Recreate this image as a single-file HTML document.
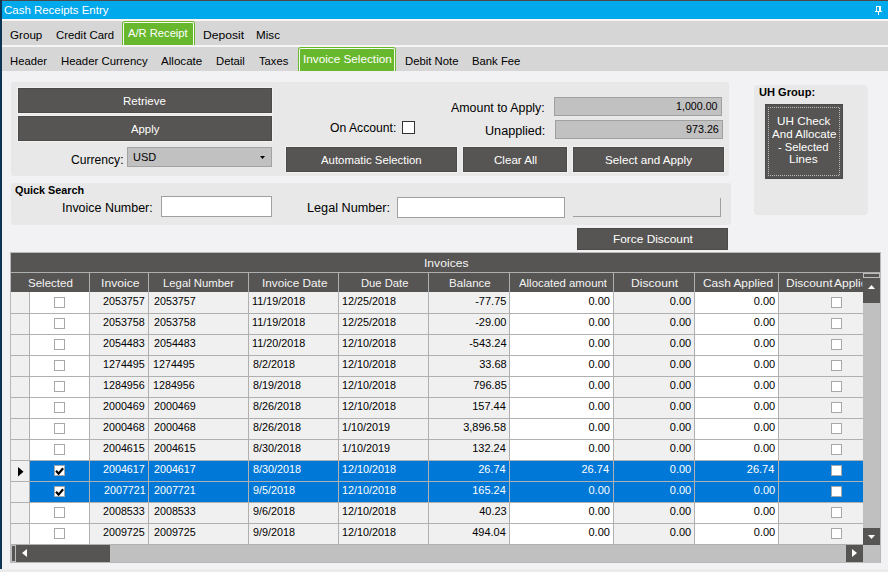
<!DOCTYPE html><html><head><meta charset="utf-8"><title>Cash Receipts Entry</title><style>

*{margin:0;padding:0}
html,body{width:888px;height:572px;overflow:hidden;background:#f2f2f4}
body{position:relative;font-family:"Liberation Sans", sans-serif}
.b{position:absolute}
.t{position:absolute;white-space:pre;font-family:"Liberation Sans", sans-serif;transform-origin:0 0}

</style></head><body>
<div class="b" style="left:0px;top:0px;width:888px;height:572px;background:#f2f2f4;"></div>
<div class="b" style="left:0px;top:0px;width:888px;height:1px;background:#4d4846;"></div>
<div class="b" style="left:0px;top:1px;width:888px;height:18px;background:#00a8ec;"></div>
<div class="b" style="left:0px;top:19px;width:888px;height:2px;background:#fbf4f1;"></div>
<div class="b" style="left:0px;top:21px;width:888px;height:24px;background:#d6d6d6;"></div>
<div class="b" style="left:0px;top:45px;width:888px;height:2px;background:#f6f4f4;"></div>
<div class="b" style="left:0px;top:47px;width:888px;height:24px;background:#d6d6d6;"></div>
<div class="b" style="left:0px;top:569px;width:888px;height:3px;background:#ebebeb;"></div>
<div class="b" style="left:0px;top:0px;width:2px;height:569px;background:#0b3552;"></div>
<div class="t" style="left:4.2px;top:5.0px;font-size:11px;line-height:11px;color:#fff;transform:scaleX(1.042);">Cash Receipts Entry</div>
<div class="b" style="left:876px;top:6px;width:5px;height:1px;background:#fff;"></div>
<div class="b" style="left:876px;top:6px;width:1px;height:5px;background:#fff;"></div>
<div class="b" style="left:879px;top:6px;width:2px;height:5px;background:#fff;"></div>
<div class="b" style="left:875px;top:11px;width:7px;height:1px;background:#fff;"></div>
<div class="b" style="left:878px;top:12px;width:1px;height:3px;background:#fff;"></div>
<div class="t" style="left:9.8px;top:30.0px;font-size:11px;line-height:11px;color:#000;transform:scaleX(1.057);">Group</div>
<div class="t" style="left:56.2px;top:30.0px;font-size:11px;line-height:11px;color:#000;transform:scaleX(1.032);">Credit Card</div>
<div class="b" style="left:122px;top:21px;width:73px;height:24px;background:#68b82d;border-radius:3px 3px 0 0;"></div>
<div class="b" style="left:123px;top:22px;width:71px;height:23px;border:1px solid #f4faf0;border-bottom:none;border-radius:2px 2px 0 0;box-sizing:border-box"></div>
<div class="t" style="left:128.0px;top:28.0px;font-size:11px;line-height:11px;color:#fff;transform:scaleX(1.017);">A/R Receipt</div>
<div class="t" style="left:202.7px;top:30.0px;font-size:11px;line-height:11px;color:#000;transform:scaleX(1.103);">Deposit</div>
<div class="t" style="left:255.94px;top:30.0px;font-size:11px;line-height:11px;color:#000;transform:scaleX(1.062);">Misc</div>
<div class="t" style="left:10.18px;top:56.0px;font-size:11px;line-height:11px;color:#000;transform:scaleX(1.023);">Header</div>
<div class="t" style="left:60.77px;top:56.0px;font-size:11px;line-height:11px;color:#000;transform:scaleX(1.034);">Header Currency</div>
<div class="t" style="left:160.8px;top:56.0px;font-size:11px;line-height:11px;color:#000;transform:scaleX(1.054);">Allocate</div>
<div class="t" style="left:215.57px;top:56.0px;font-size:11px;line-height:11px;color:#000;transform:scaleX(1.026);">Detail</div>
<div class="t" style="left:259.4px;top:56.0px;font-size:11px;line-height:11px;color:#000;transform:scaleX(1.021);">Taxes</div>
<div class="b" style="left:298px;top:47px;width:98px;height:24px;background:#68b82d;border-radius:3px 3px 0 0;"></div>
<div class="b" style="left:299px;top:48px;width:96px;height:23px;border:1px solid #f4faf0;border-bottom:none;border-radius:2px 2px 0 0;box-sizing:border-box"></div>
<div class="t" style="left:302.93px;top:54.0px;font-size:11px;line-height:11px;color:#fff;transform:scaleX(1.068);">Invoice Selection</div>
<div class="t" style="left:405.27px;top:56.0px;font-size:11px;line-height:11px;color:#000;transform:scaleX(1.029);">Debit Note</div>
<div class="t" style="left:471.57px;top:56.0px;font-size:11px;line-height:11px;color:#000;transform:scaleX(1.028);">Bank Fee</div>
<div class="b" style="left:11px;top:82px;width:718px;height:94px;background:#e8e8e8;border-radius:3px"></div>
<div class="b" style="left:17px;top:87px;width:256px;height:27px;background:#f1f1f1;"></div>
<div class="b" style="left:18px;top:88px;width:254px;height:25px;background:#575553;border:1px solid #4c4a48;box-sizing:border-box;"></div>
<div class="t" style="left:123.15px;top:96.0px;font-size:11px;line-height:11px;color:#fff;transform:scaleX(1.047);">Retrieve</div>
<div class="b" style="left:17px;top:115px;width:256px;height:27px;background:#f1f1f1;"></div>
<div class="b" style="left:18px;top:116px;width:254px;height:25px;background:#575553;border:1px solid #4c4a48;box-sizing:border-box;"></div>
<div class="t" style="left:131.0px;top:124.0px;font-size:11px;line-height:11px;color:#fff;transform:scaleX(1.029);">Apply</div>
<div class="t" style="left:71.2px;top:154.0px;font-size:12.3px;line-height:12.3px;color:#000;transform:scaleX(0.985);">Currency:</div>
<div class="b" style="left:127px;top:147px;width:145px;height:20px;background:#c1c1c1;border:1px solid #a3a3a3;box-sizing:border-box;"></div>
<div class="t" style="left:133.0px;top:152.0px;font-size:11px;line-height:11px;color:#000;">USD</div>
<svg class="b" style="left:260px;top:156px" width="5" height="3"><path d="M0 0h5L2.5 3z" fill="#000"/></svg>
<div class="t" style="left:330.1px;top:122.0px;font-size:12.3px;line-height:12.3px;color:#000;transform:scaleX(0.991);">On Account:</div>
<div class="b" style="left:402px;top:121px;width:13px;height:13px;background:#fff;border:1px solid #333;box-sizing:border-box;"></div>
<div class="t" style="left:451.1px;top:102.0px;font-size:12.3px;line-height:12.3px;color:#000;transform:scaleX(1.008);">Amount to Apply:</div>
<div class="b" style="left:554px;top:97px;width:168px;height:19px;background:#c1c1c1;border:1px solid #a0a0a0;box-sizing:border-box;"></div>
<div class="t" style="left:676.03px;top:101.0px;font-size:11px;line-height:11px;color:#000;transform:scaleX(0.969);">1,000.00</div>
<div class="t" style="left:485.17px;top:125.0px;font-size:12.3px;line-height:12.3px;color:#000;transform:scaleX(1.026);">Unapplied:</div>
<div class="b" style="left:555px;top:120px;width:168px;height:19px;background:#c1c1c1;border:1px solid #a0a0a0;box-sizing:border-box;"></div>
<div class="t" style="left:686.2px;top:124.0px;font-size:11px;line-height:11px;color:#000;transform:scaleX(0.976);">973.26</div>
<div class="b" style="left:285px;top:146px;width:173px;height:27px;background:#f1f1f1;"></div>
<div class="b" style="left:286px;top:147px;width:171px;height:25px;background:#575553;border:1px solid #4c4a48;box-sizing:border-box;"></div>
<div class="t" style="left:321.1px;top:155.0px;font-size:11px;line-height:11px;color:#fff;transform:scaleX(1.035);">Automatic Selection</div>
<div class="b" style="left:462px;top:146px;width:106px;height:27px;background:#f1f1f1;"></div>
<div class="b" style="left:463px;top:147px;width:104px;height:25px;background:#575553;border:1px solid #4c4a48;box-sizing:border-box;"></div>
<div class="t" style="left:494.4px;top:155.0px;font-size:11px;line-height:11px;color:#fff;transform:scaleX(1.053);">Clear All</div>
<div class="b" style="left:572px;top:146px;width:153px;height:27px;background:#f1f1f1;"></div>
<div class="b" style="left:573px;top:147px;width:151px;height:25px;background:#575553;border:1px solid #4c4a48;box-sizing:border-box;"></div>
<div class="t" style="left:604.94px;top:155.0px;font-size:11px;line-height:11px;color:#fff;transform:scaleX(1.062);">Select and Apply</div>
<div class="b" style="left:754px;top:85px;width:114px;height:130px;background:#e8e8e8;border-radius:4px"></div>
<div class="t" style="left:758.6px;top:87.0px;font-size:11px;line-height:11px;color:#000;transform:scaleX(1.009);font-weight:700;">UH Group:</div>
<div class="b" style="left:765px;top:104px;width:78px;height:75px;background:#575553;border:1px solid #4c4a48;box-sizing:border-box;"></div>
<svg class="b" style="left:768px;top:107px" width="72" height="69"><rect x="0.5" y="0.5" width="71" height="68" fill="none" stroke="#bcbcbc" stroke-width="1" stroke-dasharray="1 1" stroke-dashoffset="0.5" shape-rendering="crispEdges"/></svg>
<div class="t" style="left:776.93px;top:116.0px;font-size:11px;line-height:11px;color:#fff;transform:scaleX(1.065);">UH Check</div>
<div class="t" style="left:772.0px;top:129.0px;font-size:11px;line-height:11px;color:#fff;transform:scaleX(1.052);">And Allocate</div>
<div class="t" style="left:778.3px;top:142.0px;font-size:11px;line-height:11px;color:#fff;transform:scaleX(1.02);">- Selected</div>
<div class="t" style="left:789.01px;top:154.0px;font-size:11px;line-height:11px;color:#fff;transform:scaleX(1.088);">Lines</div>
<div class="b" style="left:11px;top:183px;width:720px;height:42px;background:#e8e8e8;border-radius:3px"></div>
<div class="t" style="left:15.4px;top:185.0px;font-size:11px;line-height:11px;color:#000;transform:scaleX(0.983);font-weight:700;">Quick Search</div>
<div class="t" style="left:62.19px;top:202.0px;font-size:12.3px;line-height:12.3px;color:#000;transform:scaleX(1.013);">Invoice Number:</div>
<div class="b" style="left:161px;top:196px;width:111px;height:21px;background:#fff;border:1px solid #a0a0a0;box-sizing:border-box;"></div>
<div class="t" style="left:307.07px;top:202.0px;font-size:12.3px;line-height:12.3px;color:#000;transform:scaleX(1.03);">Legal Number:</div>
<div class="b" style="left:397px;top:197px;width:168px;height:21px;background:#fff;border:1px solid #a0a0a0;box-sizing:border-box;"></div>
<div class="b" style="left:573px;top:198px;width:148px;height:19px;border-right:1px solid #a0a0a0;border-bottom:1px solid #a0a0a0;box-sizing:border-box"></div>
<div class="b" style="left:576px;top:227px;width:153px;height:24px;background:#f1f1f1;"></div>
<div class="b" style="left:577px;top:228px;width:151px;height:22px;background:#575553;border:1px solid #4c4a48;box-sizing:border-box;"></div>
<div class="t" style="left:612.92px;top:234.0px;font-size:11px;line-height:11px;color:#fff;transform:scaleX(1.079);">Force Discount</div>
<div class="b" style="left:10px;top:252px;width:871px;height:311px;background:#b9b9b9;"></div>
<div class="b" style="left:11px;top:253px;width:869px;height:309px;background:#575553;"></div>
<div class="b" style="left:11px;top:272px;width:869px;height:1px;background:#aeaeae;"></div>
<div class="t" style="left:423.7px;top:258.0px;font-size:11px;line-height:11px;color:#f4f4f4;transform:scaleX(1.103);">Invoices</div>
<div class="b" style="left:89px;top:273px;width:1px;height:19px;background:#b0b0b0;"></div>
<div class="b" style="left:148px;top:273px;width:1px;height:19px;background:#b0b0b0;"></div>
<div class="b" style="left:248px;top:273px;width:1px;height:19px;background:#b0b0b0;"></div>
<div class="b" style="left:338px;top:273px;width:1px;height:19px;background:#b0b0b0;"></div>
<div class="b" style="left:428px;top:273px;width:1px;height:19px;background:#b0b0b0;"></div>
<div class="b" style="left:509px;top:273px;width:1px;height:19px;background:#b0b0b0;"></div>
<div class="b" style="left:613px;top:273px;width:1px;height:19px;background:#b0b0b0;"></div>
<div class="b" style="left:694px;top:273px;width:1px;height:19px;background:#b0b0b0;"></div>
<div class="b" style="left:778px;top:273px;width:1px;height:19px;background:#b0b0b0;"></div>
<div class="t" style="left:27.85px;top:278.0px;font-size:11px;line-height:11px;color:#f4f4f4;transform:scaleX(1.049);">Selected</div>
<div class="t" style="left:101.09px;top:278.0px;font-size:11px;line-height:11px;color:#f4f4f4;transform:scaleX(1.106);">Invoice</div>
<div class="t" style="left:162.77px;top:278.0px;font-size:11px;line-height:11px;color:#f4f4f4;transform:scaleX(1.029);">Legal Number</div>
<div class="t" style="left:261.53px;top:278.0px;font-size:11px;line-height:11px;color:#f4f4f4;transform:scaleX(1.07);">Invoice Date</div>
<div class="t" style="left:360.78px;top:278.0px;font-size:11px;line-height:11px;color:#f4f4f4;transform:scaleX(1.02);">Due Date</div>
<div class="t" style="left:448.75px;top:278.0px;font-size:11px;line-height:11px;color:#f4f4f4;transform:scaleX(1.051);">Balance</div>
<div class="t" style="left:518.8px;top:278.0px;font-size:11px;line-height:11px;color:#f4f4f4;transform:scaleX(1.035);">Allocated amount</div>
<div class="t" style="left:630.9px;top:278.0px;font-size:11px;line-height:11px;color:#f4f4f4;transform:scaleX(1.098);">Discount</div>
<div class="t" style="left:703.0px;top:278.0px;font-size:11px;line-height:11px;color:#f4f4f4;transform:scaleX(1.081);">Cash Applied</div>
<div class="t" style="left:785.51px;top:278.0px;font-size:11px;line-height:11px;color:#f4f4f4;transform:scaleX(1.086);">Discount</div>
<div class="t" style="left:834.2px;top:278.0px;font-size:11px;line-height:11px;color:#f4f4f4;transform:scaleX(1.09);width:26.42px;overflow:hidden;">Applied</div>
<div class="b" style="left:11px;top:292px;width:852px;height:253px;background:#b0b0b0;"></div>
<div class="b" style="left:11px;top:292px;width:18px;height:21px;background:#f0f0f0;"></div>
<div class="b" style="left:30px;top:292px;width:59px;height:21px;background:#ffffff;"></div>
<div class="b" style="left:90px;top:292px;width:58px;height:21px;background:#f0f0f0;"></div>
<div class="b" style="left:149px;top:292px;width:99px;height:21px;background:#f0f0f0;"></div>
<div class="b" style="left:249px;top:292px;width:89px;height:21px;background:#f0f0f0;"></div>
<div class="b" style="left:339px;top:292px;width:89px;height:21px;background:#f0f0f0;"></div>
<div class="b" style="left:429px;top:292px;width:80px;height:21px;background:#f0f0f0;"></div>
<div class="b" style="left:510px;top:292px;width:103px;height:21px;background:#ffffff;"></div>
<div class="b" style="left:614px;top:292px;width:80px;height:21px;background:#f0f0f0;"></div>
<div class="b" style="left:695px;top:292px;width:83px;height:21px;background:#ffffff;"></div>
<div class="b" style="left:779px;top:292px;width:84px;height:21px;background:#f0f0f0;"></div>
<div class="t" style="left:102.98px;top:296.0px;font-size:11px;line-height:11px;color:#000;transform:scaleX(0.975);">2053757</div>
<div class="t" style="left:154.3px;top:296.0px;font-size:11px;line-height:11px;color:#000;transform:scaleX(0.975);">2053757</div>
<div class="t" style="left:252.12px;top:296.0px;font-size:11px;line-height:11px;color:#000;transform:scaleX(0.98);">11/19/2018</div>
<div class="t" style="left:342.12px;top:296.0px;font-size:11px;line-height:11px;color:#000;transform:scaleX(0.98);">12/25/2018</div>
<div class="t" style="left:475.2px;top:296.0px;font-size:11px;line-height:11px;color:#000;">-77.75</div>
<div class="t" style="left:588.5px;top:296.0px;font-size:11px;line-height:11px;color:#000;">0.00</div>
<div class="t" style="left:669.8px;top:296.0px;font-size:11px;line-height:11px;color:#000;">0.00</div>
<div class="t" style="left:753.8px;top:296.0px;font-size:11px;line-height:11px;color:#000;">0.00</div>
<div class="b" style="left:54px;top:297px;width:11px;height:11px;background:#fff;border:1px solid #a8a8a8;box-sizing:border-box;"></div>
<div class="b" style="left:831px;top:297px;width:11px;height:11px;background:#fff;border:1px solid #a8a8a8;box-sizing:border-box;"></div>
<div class="b" style="left:11px;top:314px;width:18px;height:20px;background:#f0f0f0;"></div>
<div class="b" style="left:30px;top:314px;width:59px;height:20px;background:#ffffff;"></div>
<div class="b" style="left:90px;top:314px;width:58px;height:20px;background:#f0f0f0;"></div>
<div class="b" style="left:149px;top:314px;width:99px;height:20px;background:#f0f0f0;"></div>
<div class="b" style="left:249px;top:314px;width:89px;height:20px;background:#f0f0f0;"></div>
<div class="b" style="left:339px;top:314px;width:89px;height:20px;background:#f0f0f0;"></div>
<div class="b" style="left:429px;top:314px;width:80px;height:20px;background:#f0f0f0;"></div>
<div class="b" style="left:510px;top:314px;width:103px;height:20px;background:#ffffff;"></div>
<div class="b" style="left:614px;top:314px;width:80px;height:20px;background:#f0f0f0;"></div>
<div class="b" style="left:695px;top:314px;width:83px;height:20px;background:#ffffff;"></div>
<div class="b" style="left:779px;top:314px;width:84px;height:20px;background:#f0f0f0;"></div>
<div class="t" style="left:102.98px;top:317.0px;font-size:11px;line-height:11px;color:#000;transform:scaleX(0.975);">2053758</div>
<div class="t" style="left:154.3px;top:317.0px;font-size:11px;line-height:11px;color:#000;transform:scaleX(0.975);">2053758</div>
<div class="t" style="left:252.12px;top:317.0px;font-size:11px;line-height:11px;color:#000;transform:scaleX(0.98);">11/19/2018</div>
<div class="t" style="left:342.12px;top:317.0px;font-size:11px;line-height:11px;color:#000;transform:scaleX(0.98);">12/25/2018</div>
<div class="t" style="left:475.2px;top:317.0px;font-size:11px;line-height:11px;color:#000;">-29.00</div>
<div class="t" style="left:588.5px;top:317.0px;font-size:11px;line-height:11px;color:#000;">0.00</div>
<div class="t" style="left:669.8px;top:317.0px;font-size:11px;line-height:11px;color:#000;">0.00</div>
<div class="t" style="left:753.8px;top:317.0px;font-size:11px;line-height:11px;color:#000;">0.00</div>
<div class="b" style="left:54px;top:318px;width:11px;height:11px;background:#fff;border:1px solid #a8a8a8;box-sizing:border-box;"></div>
<div class="b" style="left:831px;top:318px;width:11px;height:11px;background:#fff;border:1px solid #a8a8a8;box-sizing:border-box;"></div>
<div class="b" style="left:11px;top:335px;width:18px;height:20px;background:#f0f0f0;"></div>
<div class="b" style="left:30px;top:335px;width:59px;height:20px;background:#ffffff;"></div>
<div class="b" style="left:90px;top:335px;width:58px;height:20px;background:#f0f0f0;"></div>
<div class="b" style="left:149px;top:335px;width:99px;height:20px;background:#f0f0f0;"></div>
<div class="b" style="left:249px;top:335px;width:89px;height:20px;background:#f0f0f0;"></div>
<div class="b" style="left:339px;top:335px;width:89px;height:20px;background:#f0f0f0;"></div>
<div class="b" style="left:429px;top:335px;width:80px;height:20px;background:#f0f0f0;"></div>
<div class="b" style="left:510px;top:335px;width:103px;height:20px;background:#ffffff;"></div>
<div class="b" style="left:614px;top:335px;width:80px;height:20px;background:#f0f0f0;"></div>
<div class="b" style="left:695px;top:335px;width:83px;height:20px;background:#ffffff;"></div>
<div class="b" style="left:779px;top:335px;width:84px;height:20px;background:#f0f0f0;"></div>
<div class="t" style="left:102.98px;top:338.0px;font-size:11px;line-height:11px;color:#000;transform:scaleX(0.975);">2054483</div>
<div class="t" style="left:154.3px;top:338.0px;font-size:11px;line-height:11px;color:#000;transform:scaleX(0.975);">2054483</div>
<div class="t" style="left:252.12px;top:338.0px;font-size:11px;line-height:11px;color:#000;transform:scaleX(0.98);">11/20/2018</div>
<div class="t" style="left:342.12px;top:338.0px;font-size:11px;line-height:11px;color:#000;transform:scaleX(0.98);">12/10/2018</div>
<div class="t" style="left:469.2px;top:338.0px;font-size:11px;line-height:11px;color:#000;">-543.24</div>
<div class="t" style="left:588.5px;top:338.0px;font-size:11px;line-height:11px;color:#000;">0.00</div>
<div class="t" style="left:669.8px;top:338.0px;font-size:11px;line-height:11px;color:#000;">0.00</div>
<div class="t" style="left:753.8px;top:338.0px;font-size:11px;line-height:11px;color:#000;">0.00</div>
<div class="b" style="left:54px;top:339px;width:11px;height:11px;background:#fff;border:1px solid #a8a8a8;box-sizing:border-box;"></div>
<div class="b" style="left:831px;top:339px;width:11px;height:11px;background:#fff;border:1px solid #a8a8a8;box-sizing:border-box;"></div>
<div class="b" style="left:11px;top:356px;width:18px;height:20px;background:#f0f0f0;"></div>
<div class="b" style="left:30px;top:356px;width:59px;height:20px;background:#ffffff;"></div>
<div class="b" style="left:90px;top:356px;width:58px;height:20px;background:#f0f0f0;"></div>
<div class="b" style="left:149px;top:356px;width:99px;height:20px;background:#f0f0f0;"></div>
<div class="b" style="left:249px;top:356px;width:89px;height:20px;background:#f0f0f0;"></div>
<div class="b" style="left:339px;top:356px;width:89px;height:20px;background:#f0f0f0;"></div>
<div class="b" style="left:429px;top:356px;width:80px;height:20px;background:#f0f0f0;"></div>
<div class="b" style="left:510px;top:356px;width:103px;height:20px;background:#ffffff;"></div>
<div class="b" style="left:614px;top:356px;width:80px;height:20px;background:#f0f0f0;"></div>
<div class="b" style="left:695px;top:356px;width:83px;height:20px;background:#ffffff;"></div>
<div class="b" style="left:779px;top:356px;width:84px;height:20px;background:#f0f0f0;"></div>
<div class="t" style="left:102.98px;top:359.0px;font-size:11px;line-height:11px;color:#000;transform:scaleX(0.975);">1274495</div>
<div class="t" style="left:153.33px;top:359.0px;font-size:11px;line-height:11px;color:#000;transform:scaleX(0.975);">1274495</div>
<div class="t" style="left:253.1px;top:359.0px;font-size:11px;line-height:11px;color:#000;transform:scaleX(0.98);">8/2/2018</div>
<div class="t" style="left:342.12px;top:359.0px;font-size:11px;line-height:11px;color:#000;transform:scaleX(0.98);">12/10/2018</div>
<div class="t" style="left:479.2px;top:359.0px;font-size:11px;line-height:11px;color:#000;">33.68</div>
<div class="t" style="left:588.5px;top:359.0px;font-size:11px;line-height:11px;color:#000;">0.00</div>
<div class="t" style="left:669.8px;top:359.0px;font-size:11px;line-height:11px;color:#000;">0.00</div>
<div class="t" style="left:753.8px;top:359.0px;font-size:11px;line-height:11px;color:#000;">0.00</div>
<div class="b" style="left:54px;top:360px;width:11px;height:11px;background:#fff;border:1px solid #a8a8a8;box-sizing:border-box;"></div>
<div class="b" style="left:831px;top:360px;width:11px;height:11px;background:#fff;border:1px solid #a8a8a8;box-sizing:border-box;"></div>
<div class="b" style="left:11px;top:377px;width:18px;height:20px;background:#f0f0f0;"></div>
<div class="b" style="left:30px;top:377px;width:59px;height:20px;background:#ffffff;"></div>
<div class="b" style="left:90px;top:377px;width:58px;height:20px;background:#f0f0f0;"></div>
<div class="b" style="left:149px;top:377px;width:99px;height:20px;background:#f0f0f0;"></div>
<div class="b" style="left:249px;top:377px;width:89px;height:20px;background:#f0f0f0;"></div>
<div class="b" style="left:339px;top:377px;width:89px;height:20px;background:#f0f0f0;"></div>
<div class="b" style="left:429px;top:377px;width:80px;height:20px;background:#f0f0f0;"></div>
<div class="b" style="left:510px;top:377px;width:103px;height:20px;background:#ffffff;"></div>
<div class="b" style="left:614px;top:377px;width:80px;height:20px;background:#f0f0f0;"></div>
<div class="b" style="left:695px;top:377px;width:83px;height:20px;background:#ffffff;"></div>
<div class="b" style="left:779px;top:377px;width:84px;height:20px;background:#f0f0f0;"></div>
<div class="t" style="left:102.98px;top:380.0px;font-size:11px;line-height:11px;color:#000;transform:scaleX(0.975);">1284956</div>
<div class="t" style="left:153.33px;top:380.0px;font-size:11px;line-height:11px;color:#000;transform:scaleX(0.975);">1284956</div>
<div class="t" style="left:253.1px;top:380.0px;font-size:11px;line-height:11px;color:#000;transform:scaleX(0.98);">8/19/2018</div>
<div class="t" style="left:342.12px;top:380.0px;font-size:11px;line-height:11px;color:#000;transform:scaleX(0.98);">12/10/2018</div>
<div class="t" style="left:473.2px;top:380.0px;font-size:11px;line-height:11px;color:#000;">796.85</div>
<div class="t" style="left:588.5px;top:380.0px;font-size:11px;line-height:11px;color:#000;">0.00</div>
<div class="t" style="left:669.8px;top:380.0px;font-size:11px;line-height:11px;color:#000;">0.00</div>
<div class="t" style="left:753.8px;top:380.0px;font-size:11px;line-height:11px;color:#000;">0.00</div>
<div class="b" style="left:54px;top:381px;width:11px;height:11px;background:#fff;border:1px solid #a8a8a8;box-sizing:border-box;"></div>
<div class="b" style="left:831px;top:381px;width:11px;height:11px;background:#fff;border:1px solid #a8a8a8;box-sizing:border-box;"></div>
<div class="b" style="left:11px;top:398px;width:18px;height:20px;background:#f0f0f0;"></div>
<div class="b" style="left:30px;top:398px;width:59px;height:20px;background:#ffffff;"></div>
<div class="b" style="left:90px;top:398px;width:58px;height:20px;background:#f0f0f0;"></div>
<div class="b" style="left:149px;top:398px;width:99px;height:20px;background:#f0f0f0;"></div>
<div class="b" style="left:249px;top:398px;width:89px;height:20px;background:#f0f0f0;"></div>
<div class="b" style="left:339px;top:398px;width:89px;height:20px;background:#f0f0f0;"></div>
<div class="b" style="left:429px;top:398px;width:80px;height:20px;background:#f0f0f0;"></div>
<div class="b" style="left:510px;top:398px;width:103px;height:20px;background:#ffffff;"></div>
<div class="b" style="left:614px;top:398px;width:80px;height:20px;background:#f0f0f0;"></div>
<div class="b" style="left:695px;top:398px;width:83px;height:20px;background:#ffffff;"></div>
<div class="b" style="left:779px;top:398px;width:84px;height:20px;background:#f0f0f0;"></div>
<div class="t" style="left:102.98px;top:401.0px;font-size:11px;line-height:11px;color:#000;transform:scaleX(0.975);">2000469</div>
<div class="t" style="left:154.3px;top:401.0px;font-size:11px;line-height:11px;color:#000;transform:scaleX(0.975);">2000469</div>
<div class="t" style="left:253.1px;top:401.0px;font-size:11px;line-height:11px;color:#000;transform:scaleX(0.98);">8/26/2018</div>
<div class="t" style="left:342.12px;top:401.0px;font-size:11px;line-height:11px;color:#000;transform:scaleX(0.98);">12/10/2018</div>
<div class="t" style="left:472.2px;top:401.0px;font-size:11px;line-height:11px;color:#000;">157.44</div>
<div class="t" style="left:588.5px;top:401.0px;font-size:11px;line-height:11px;color:#000;">0.00</div>
<div class="t" style="left:669.8px;top:401.0px;font-size:11px;line-height:11px;color:#000;">0.00</div>
<div class="t" style="left:753.8px;top:401.0px;font-size:11px;line-height:11px;color:#000;">0.00</div>
<div class="b" style="left:54px;top:402px;width:11px;height:11px;background:#fff;border:1px solid #a8a8a8;box-sizing:border-box;"></div>
<div class="b" style="left:831px;top:402px;width:11px;height:11px;background:#fff;border:1px solid #a8a8a8;box-sizing:border-box;"></div>
<div class="b" style="left:11px;top:419px;width:18px;height:20px;background:#f0f0f0;"></div>
<div class="b" style="left:30px;top:419px;width:59px;height:20px;background:#ffffff;"></div>
<div class="b" style="left:90px;top:419px;width:58px;height:20px;background:#f0f0f0;"></div>
<div class="b" style="left:149px;top:419px;width:99px;height:20px;background:#f0f0f0;"></div>
<div class="b" style="left:249px;top:419px;width:89px;height:20px;background:#f0f0f0;"></div>
<div class="b" style="left:339px;top:419px;width:89px;height:20px;background:#f0f0f0;"></div>
<div class="b" style="left:429px;top:419px;width:80px;height:20px;background:#f0f0f0;"></div>
<div class="b" style="left:510px;top:419px;width:103px;height:20px;background:#ffffff;"></div>
<div class="b" style="left:614px;top:419px;width:80px;height:20px;background:#f0f0f0;"></div>
<div class="b" style="left:695px;top:419px;width:83px;height:20px;background:#ffffff;"></div>
<div class="b" style="left:779px;top:419px;width:84px;height:20px;background:#f0f0f0;"></div>
<div class="t" style="left:102.98px;top:422.0px;font-size:11px;line-height:11px;color:#000;transform:scaleX(0.975);">2000468</div>
<div class="t" style="left:154.3px;top:422.0px;font-size:11px;line-height:11px;color:#000;transform:scaleX(0.975);">2000468</div>
<div class="t" style="left:253.1px;top:422.0px;font-size:11px;line-height:11px;color:#000;transform:scaleX(0.98);">8/26/2018</div>
<div class="t" style="left:342.12px;top:422.0px;font-size:11px;line-height:11px;color:#000;transform:scaleX(0.98);">1/10/2019</div>
<div class="t" style="left:463.2px;top:422.0px;font-size:11px;line-height:11px;color:#000;">3,896.58</div>
<div class="t" style="left:588.5px;top:422.0px;font-size:11px;line-height:11px;color:#000;">0.00</div>
<div class="t" style="left:669.8px;top:422.0px;font-size:11px;line-height:11px;color:#000;">0.00</div>
<div class="t" style="left:753.8px;top:422.0px;font-size:11px;line-height:11px;color:#000;">0.00</div>
<div class="b" style="left:54px;top:423px;width:11px;height:11px;background:#fff;border:1px solid #a8a8a8;box-sizing:border-box;"></div>
<div class="b" style="left:831px;top:423px;width:11px;height:11px;background:#fff;border:1px solid #a8a8a8;box-sizing:border-box;"></div>
<div class="b" style="left:11px;top:440px;width:18px;height:20px;background:#f0f0f0;"></div>
<div class="b" style="left:30px;top:440px;width:59px;height:20px;background:#ffffff;"></div>
<div class="b" style="left:90px;top:440px;width:58px;height:20px;background:#f0f0f0;"></div>
<div class="b" style="left:149px;top:440px;width:99px;height:20px;background:#f0f0f0;"></div>
<div class="b" style="left:249px;top:440px;width:89px;height:20px;background:#f0f0f0;"></div>
<div class="b" style="left:339px;top:440px;width:89px;height:20px;background:#f0f0f0;"></div>
<div class="b" style="left:429px;top:440px;width:80px;height:20px;background:#f0f0f0;"></div>
<div class="b" style="left:510px;top:440px;width:103px;height:20px;background:#ffffff;"></div>
<div class="b" style="left:614px;top:440px;width:80px;height:20px;background:#f0f0f0;"></div>
<div class="b" style="left:695px;top:440px;width:83px;height:20px;background:#ffffff;"></div>
<div class="b" style="left:779px;top:440px;width:84px;height:20px;background:#f0f0f0;"></div>
<div class="t" style="left:102.98px;top:443.0px;font-size:11px;line-height:11px;color:#000;transform:scaleX(0.975);">2004615</div>
<div class="t" style="left:154.3px;top:443.0px;font-size:11px;line-height:11px;color:#000;transform:scaleX(0.975);">2004615</div>
<div class="t" style="left:253.1px;top:443.0px;font-size:11px;line-height:11px;color:#000;transform:scaleX(0.98);">8/30/2018</div>
<div class="t" style="left:342.12px;top:443.0px;font-size:11px;line-height:11px;color:#000;transform:scaleX(0.98);">1/10/2019</div>
<div class="t" style="left:472.2px;top:443.0px;font-size:11px;line-height:11px;color:#000;">132.24</div>
<div class="t" style="left:588.5px;top:443.0px;font-size:11px;line-height:11px;color:#000;">0.00</div>
<div class="t" style="left:669.8px;top:443.0px;font-size:11px;line-height:11px;color:#000;">0.00</div>
<div class="t" style="left:753.8px;top:443.0px;font-size:11px;line-height:11px;color:#000;">0.00</div>
<div class="b" style="left:54px;top:444px;width:11px;height:11px;background:#fff;border:1px solid #a8a8a8;box-sizing:border-box;"></div>
<div class="b" style="left:831px;top:444px;width:11px;height:11px;background:#fff;border:1px solid #a8a8a8;box-sizing:border-box;"></div>
<div class="b" style="left:11px;top:461px;width:18px;height:20px;background:#f0f0f0;"></div>
<div class="b" style="left:30px;top:461px;width:59px;height:20px;background:#0078d7;"></div>
<div class="b" style="left:90px;top:461px;width:58px;height:20px;background:#0078d7;"></div>
<div class="b" style="left:149px;top:461px;width:99px;height:20px;background:#0078d7;"></div>
<div class="b" style="left:249px;top:461px;width:89px;height:20px;background:#0078d7;"></div>
<div class="b" style="left:339px;top:461px;width:89px;height:20px;background:#0078d7;"></div>
<div class="b" style="left:429px;top:461px;width:80px;height:20px;background:#0078d7;"></div>
<div class="b" style="left:510px;top:461px;width:103px;height:20px;background:#0078d7;"></div>
<div class="b" style="left:614px;top:461px;width:80px;height:20px;background:#0078d7;"></div>
<div class="b" style="left:695px;top:461px;width:83px;height:20px;background:#0078d7;"></div>
<div class="b" style="left:779px;top:461px;width:84px;height:20px;background:#0078d7;"></div>
<div class="t" style="left:102.98px;top:464.0px;font-size:11px;line-height:11px;color:#fff;transform:scaleX(0.975);">2004617</div>
<div class="t" style="left:154.3px;top:464.0px;font-size:11px;line-height:11px;color:#fff;transform:scaleX(0.975);">2004617</div>
<div class="t" style="left:253.1px;top:464.0px;font-size:11px;line-height:11px;color:#fff;transform:scaleX(0.98);">8/30/2018</div>
<div class="t" style="left:342.12px;top:464.0px;font-size:11px;line-height:11px;color:#fff;transform:scaleX(0.98);">12/10/2018</div>
<div class="t" style="left:478.2px;top:464.0px;font-size:11px;line-height:11px;color:#fff;">26.74</div>
<div class="t" style="left:581.5px;top:464.0px;font-size:11px;line-height:11px;color:#fff;">26.74</div>
<div class="t" style="left:669.8px;top:464.0px;font-size:11px;line-height:11px;color:#fff;">0.00</div>
<div class="t" style="left:746.8px;top:464.0px;font-size:11px;line-height:11px;color:#fff;">26.74</div>
<div class="b" style="left:54px;top:465px;width:11px;height:11px;background:#fff;border:1px solid #a8a8a8;box-sizing:border-box;"></div>
<svg class="b" style="left:55px;top:466px" width="9" height="10" viewBox="0 0 9 10"><path d="M1 4.7 L3.6 7.6 L8.1 2.3" fill="none" stroke="#000" stroke-width="2.2"/></svg>
<div class="b" style="left:831px;top:465px;width:11px;height:11px;background:#fff;border:1px solid #a8a8a8;box-sizing:border-box;"></div>
<svg class="b" style="left:18px;top:467px" width="6" height="10"><path d="M0 0L5.5 4.7L0 9.4z" fill="#000"/></svg>
<div class="b" style="left:11px;top:482px;width:18px;height:20px;background:#f0f0f0;"></div>
<div class="b" style="left:30px;top:482px;width:59px;height:20px;background:#0078d7;"></div>
<div class="b" style="left:90px;top:482px;width:58px;height:20px;background:#0078d7;"></div>
<div class="b" style="left:149px;top:482px;width:99px;height:20px;background:#0078d7;"></div>
<div class="b" style="left:249px;top:482px;width:89px;height:20px;background:#0078d7;"></div>
<div class="b" style="left:339px;top:482px;width:89px;height:20px;background:#0078d7;"></div>
<div class="b" style="left:429px;top:482px;width:80px;height:20px;background:#0078d7;"></div>
<div class="b" style="left:510px;top:482px;width:103px;height:20px;background:#0078d7;"></div>
<div class="b" style="left:614px;top:482px;width:80px;height:20px;background:#0078d7;"></div>
<div class="b" style="left:695px;top:482px;width:83px;height:20px;background:#0078d7;"></div>
<div class="b" style="left:779px;top:482px;width:84px;height:20px;background:#0078d7;"></div>
<div class="t" style="left:103.95px;top:485.0px;font-size:11px;line-height:11px;color:#fff;transform:scaleX(0.975);">2007721</div>
<div class="t" style="left:154.3px;top:485.0px;font-size:11px;line-height:11px;color:#fff;transform:scaleX(0.975);">2007721</div>
<div class="t" style="left:253.1px;top:485.0px;font-size:11px;line-height:11px;color:#fff;transform:scaleX(0.98);">9/5/2018</div>
<div class="t" style="left:342.12px;top:485.0px;font-size:11px;line-height:11px;color:#fff;transform:scaleX(0.98);">12/10/2018</div>
<div class="t" style="left:472.2px;top:485.0px;font-size:11px;line-height:11px;color:#fff;">165.24</div>
<div class="t" style="left:588.5px;top:485.0px;font-size:11px;line-height:11px;color:#fff;">0.00</div>
<div class="t" style="left:669.8px;top:485.0px;font-size:11px;line-height:11px;color:#fff;">0.00</div>
<div class="t" style="left:753.8px;top:485.0px;font-size:11px;line-height:11px;color:#fff;">0.00</div>
<div class="b" style="left:54px;top:486px;width:11px;height:11px;background:#fff;border:1px solid #a8a8a8;box-sizing:border-box;"></div>
<svg class="b" style="left:55px;top:487px" width="9" height="10" viewBox="0 0 9 10"><path d="M1 4.7 L3.6 7.6 L8.1 2.3" fill="none" stroke="#000" stroke-width="2.2"/></svg>
<div class="b" style="left:831px;top:486px;width:11px;height:11px;background:#fff;border:1px solid #a8a8a8;box-sizing:border-box;"></div>
<div class="b" style="left:11px;top:503px;width:18px;height:20px;background:#f0f0f0;"></div>
<div class="b" style="left:30px;top:503px;width:59px;height:20px;background:#ffffff;"></div>
<div class="b" style="left:90px;top:503px;width:58px;height:20px;background:#f0f0f0;"></div>
<div class="b" style="left:149px;top:503px;width:99px;height:20px;background:#f0f0f0;"></div>
<div class="b" style="left:249px;top:503px;width:89px;height:20px;background:#f0f0f0;"></div>
<div class="b" style="left:339px;top:503px;width:89px;height:20px;background:#f0f0f0;"></div>
<div class="b" style="left:429px;top:503px;width:80px;height:20px;background:#f0f0f0;"></div>
<div class="b" style="left:510px;top:503px;width:103px;height:20px;background:#ffffff;"></div>
<div class="b" style="left:614px;top:503px;width:80px;height:20px;background:#f0f0f0;"></div>
<div class="b" style="left:695px;top:503px;width:83px;height:20px;background:#ffffff;"></div>
<div class="b" style="left:779px;top:503px;width:84px;height:20px;background:#f0f0f0;"></div>
<div class="t" style="left:102.98px;top:506.0px;font-size:11px;line-height:11px;color:#000;transform:scaleX(0.975);">2008533</div>
<div class="t" style="left:154.3px;top:506.0px;font-size:11px;line-height:11px;color:#000;transform:scaleX(0.975);">2008533</div>
<div class="t" style="left:253.1px;top:506.0px;font-size:11px;line-height:11px;color:#000;transform:scaleX(0.98);">9/6/2018</div>
<div class="t" style="left:342.12px;top:506.0px;font-size:11px;line-height:11px;color:#000;transform:scaleX(0.98);">12/10/2018</div>
<div class="t" style="left:479.2px;top:506.0px;font-size:11px;line-height:11px;color:#000;">40.23</div>
<div class="t" style="left:588.5px;top:506.0px;font-size:11px;line-height:11px;color:#000;">0.00</div>
<div class="t" style="left:669.8px;top:506.0px;font-size:11px;line-height:11px;color:#000;">0.00</div>
<div class="t" style="left:753.8px;top:506.0px;font-size:11px;line-height:11px;color:#000;">0.00</div>
<div class="b" style="left:54px;top:507px;width:11px;height:11px;background:#fff;border:1px solid #a8a8a8;box-sizing:border-box;"></div>
<div class="b" style="left:831px;top:507px;width:11px;height:11px;background:#fff;border:1px solid #a8a8a8;box-sizing:border-box;"></div>
<div class="b" style="left:11px;top:524px;width:18px;height:20px;background:#f0f0f0;"></div>
<div class="b" style="left:30px;top:524px;width:59px;height:20px;background:#ffffff;"></div>
<div class="b" style="left:90px;top:524px;width:58px;height:20px;background:#f0f0f0;"></div>
<div class="b" style="left:149px;top:524px;width:99px;height:20px;background:#f0f0f0;"></div>
<div class="b" style="left:249px;top:524px;width:89px;height:20px;background:#f0f0f0;"></div>
<div class="b" style="left:339px;top:524px;width:89px;height:20px;background:#f0f0f0;"></div>
<div class="b" style="left:429px;top:524px;width:80px;height:20px;background:#f0f0f0;"></div>
<div class="b" style="left:510px;top:524px;width:103px;height:20px;background:#ffffff;"></div>
<div class="b" style="left:614px;top:524px;width:80px;height:20px;background:#f0f0f0;"></div>
<div class="b" style="left:695px;top:524px;width:83px;height:20px;background:#ffffff;"></div>
<div class="b" style="left:779px;top:524px;width:84px;height:20px;background:#f0f0f0;"></div>
<div class="t" style="left:102.98px;top:527.0px;font-size:11px;line-height:11px;color:#000;transform:scaleX(0.975);">2009725</div>
<div class="t" style="left:154.3px;top:527.0px;font-size:11px;line-height:11px;color:#000;transform:scaleX(0.975);">2009725</div>
<div class="t" style="left:253.1px;top:527.0px;font-size:11px;line-height:11px;color:#000;transform:scaleX(0.98);">9/9/2018</div>
<div class="t" style="left:342.12px;top:527.0px;font-size:11px;line-height:11px;color:#000;transform:scaleX(0.98);">12/10/2018</div>
<div class="t" style="left:472.2px;top:527.0px;font-size:11px;line-height:11px;color:#000;">494.04</div>
<div class="t" style="left:588.5px;top:527.0px;font-size:11px;line-height:11px;color:#000;">0.00</div>
<div class="t" style="left:669.8px;top:527.0px;font-size:11px;line-height:11px;color:#000;">0.00</div>
<div class="t" style="left:753.8px;top:527.0px;font-size:11px;line-height:11px;color:#000;">0.00</div>
<div class="b" style="left:54px;top:528px;width:11px;height:11px;background:#fff;border:1px solid #a8a8a8;box-sizing:border-box;"></div>
<div class="b" style="left:831px;top:528px;width:11px;height:11px;background:#fff;border:1px solid #a8a8a8;box-sizing:border-box;"></div>
<div class="b" style="left:863px;top:273px;width:17px;height:290px;background:#c0c0c0;"></div>
<div class="b" style="left:863px;top:273px;width:17px;height:5px;background:#bdbdbd;"></div>
<div class="b" style="left:864px;top:274px;width:15px;height:3px;background:#575553;"></div>
<div class="b" style="left:863px;top:278px;width:17px;height:25px;background:#575553;"></div>
<svg class="b" style="left:868px;top:285px" width="7" height="4"><path d="M3.5 0L7 4H0z" fill="#fff"/></svg>
<div class="b" style="left:863px;top:528px;width:17px;height:17px;background:#575553;"></div>
<svg class="b" style="left:868px;top:535px" width="7" height="4"><path d="M0 0H7L3.5 4z" fill="#fff"/></svg>
<div class="b" style="left:11px;top:545px;width:852px;height:17px;background:#c0c0c0;"></div>
<div class="b" style="left:11px;top:545px;width:5px;height:17px;background:#bdbdbd;"></div>
<div class="b" style="left:12px;top:546px;width:3px;height:15px;background:#575553;"></div>
<div class="b" style="left:16px;top:545px;width:94px;height:17px;background:#575553;"></div>
<svg class="b" style="left:22px;top:549px" width="5" height="8"><path d="M5 0V8L0 4z" fill="#fff"/></svg>
<div class="b" style="left:846px;top:545px;width:17px;height:17px;background:#575553;"></div>
<svg class="b" style="left:852px;top:549px" width="5" height="8"><path d="M0 0V8L5 4z" fill="#fff"/></svg>
<div class="b" style="left:863px;top:545px;width:17px;height:17px;background:#c0c0c0;"></div>
</body></html>
